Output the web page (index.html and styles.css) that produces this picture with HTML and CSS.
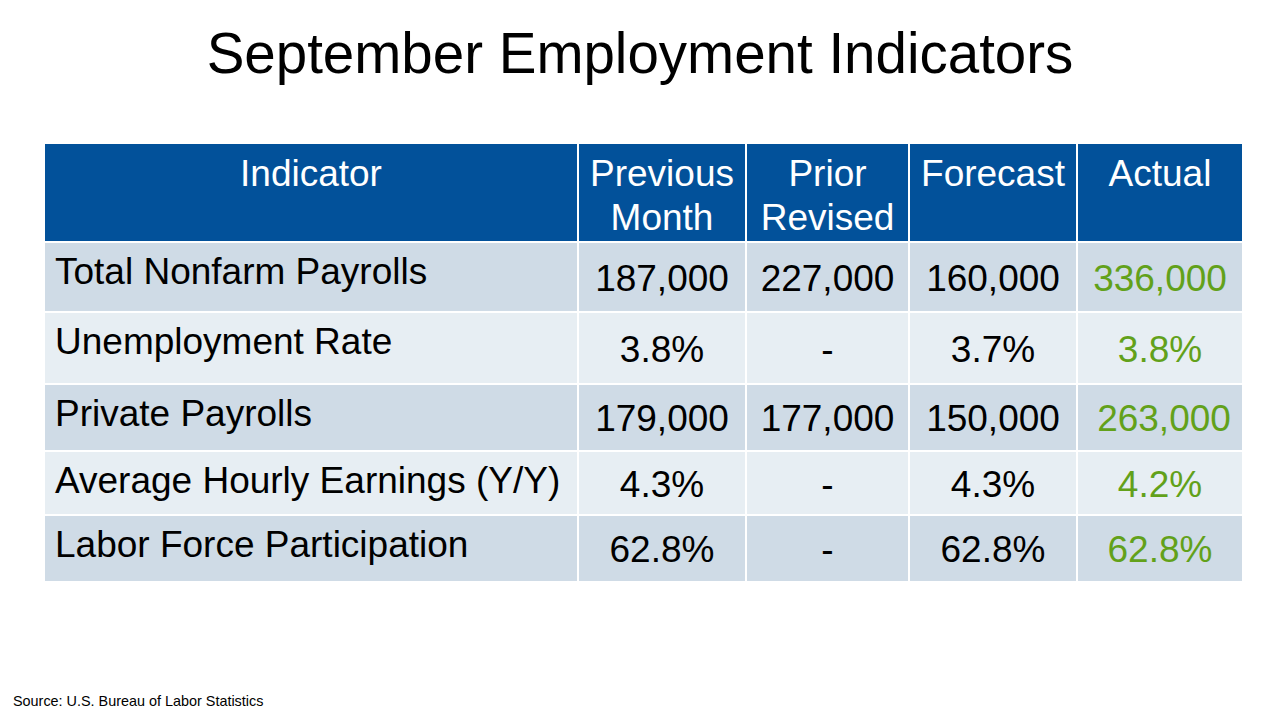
FILE: index.html
```html
<!DOCTYPE html>
<html lang="en">
<head>
<meta charset="utf-8">
<title>September Employment Indicators</title>
<link rel="stylesheet" href="styles.css">
</head>
<body>
<main class="slide">
  <h1 class="title">September Employment Indicators</h1>
  <div class="table">
    <div class="cell head">Indicator</div>
    <div class="cell head">Previous<br>Month</div>
    <div class="cell head">Prior<br>Revised</div>
    <div class="cell head">Forecast</div>
    <div class="cell head">Actual</div>

    <div class="cell label dark">Total Nonfarm Payrolls</div>
    <div class="cell num dark">187,000</div>
    <div class="cell num dark">227,000</div>
    <div class="cell num dark">160,000</div>
    <div class="cell num dark actual">336,000</div>

    <div class="cell label light">Unemployment Rate</div>
    <div class="cell num light">3.8%</div>
    <div class="cell num light">-</div>
    <div class="cell num light">3.7%</div>
    <div class="cell num light actual">3.8%</div>

    <div class="cell label dark">Private Payrolls</div>
    <div class="cell num dark">179,000</div>
    <div class="cell num dark">177,000</div>
    <div class="cell num dark">150,000</div>
    <div class="cell num dark actual shift">263,000</div>

    <div class="cell label light">Average Hourly Earnings (Y/Y)</div>
    <div class="cell num light">4.3%</div>
    <div class="cell num light">-</div>
    <div class="cell num light">4.3%</div>
    <div class="cell num light actual">4.2%</div>

    <div class="cell label dark">Labor Force Participation</div>
    <div class="cell num dark">62.8%</div>
    <div class="cell num dark">-</div>
    <div class="cell num dark">62.8%</div>
    <div class="cell num dark actual">62.8%</div>
  </div>
  <p class="source">Source: U.S. Bureau of Labor Statistics</p>
</main>
</body>
</html>
```

FILE: styles.css
```css
html, body {
  margin: 0;
  padding: 0;
  background: #ffffff;
}

body {
  font-family: "Liberation Sans", Arial, sans-serif;
  color: #000000;
}

.slide {
  width: 1280px;
  height: 720px;
  overflow: hidden;
  display: flex;
  flex-direction: column;
}

.title {
  margin: 21px 0 0 0;
  font-size: 56.5px;
  font-weight: normal;
  line-height: 66px;
  text-align: center;
}

.table {
  margin: 57px 0 0 45px;
  display: grid;
  grid-template-columns: 532px 166px 161px 166px 164px;
  grid-template-rows: 97px 68px 70px 65px 62px 65px;
  column-gap: 2px;
  row-gap: 2px;
}

.cell {
  font-size: 37px;
  line-height: 44px;
  white-space: nowrap;
}

.head {
  background: #02519a;
  color: #ffffff;
  text-align: center;
  padding-top: 8px;
  box-sizing: border-box;
}

.dark {
  background: #cfdbe6;
}

.light {
  background: #e7eef3;
}

.label {
  padding: 7px 0 0 10px;
  box-sizing: border-box;
}

.num {
  display: flex;
  align-items: center;
  justify-content: center;
  padding-top: 3px;
  box-sizing: border-box;
}

.actual {
  color: #62a11a;
}

.shift {
  padding-left: 8px;
}

.source {
  margin: 112px 0 0 13px;
  font-size: 14.4px;
  line-height: 17px;
}
```
